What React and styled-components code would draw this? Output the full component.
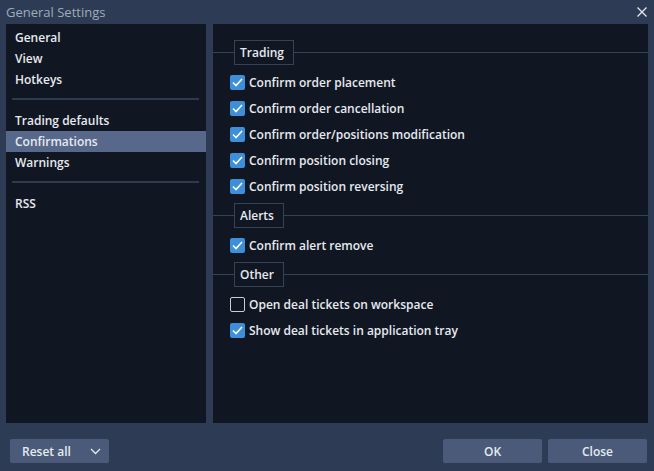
import styled, { createGlobalStyle } from 'styled-components';
import { useState } from 'react';

const GlobalStyle = createGlobalStyle`
	html, body {
		margin: 0;
		padding: 0;
		background: #2d3c54;
	}
	* {
		box-sizing: border-box;
	}
`;

const Dialog = styled.div`
	width: 654px;
	height: 471px;
	background: #2d3c54;
	font-family: 'Open Sans', 'Noto Sans', sans-serif;
	font-size: 12px;
	color: #e6eaf0;
	display: flex;
	flex-direction: column;
`;

const TitleBar = styled.div`
	height: 24px;
	display: flex;
	align-items: center;
	justify-content: space-between;
	padding: 0 6px 0 6px;
`;

const Title = styled.span`
	color: #9fabbc;
	font-size: 13px;
`;

const CloseX = styled.svg`
	width: 10px;
	height: 10px;
	margin-right: 1px;
`;

const Body = styled.div`
	height: 399px;
	display: flex;
	gap: 7px;
	padding: 0 6px;
`;

const Sidebar = styled.nav`
	width: 200px;
	background: #111722;
	padding-top: 3px;
	display: flex;
	flex-direction: column;
`;

const NavItem = styled.div`
	height: 21px;
	line-height: 21px;
	padding-left: 9px;
	font-weight: 600;
	background: ${(p) => (p.$active ? '#58688a' : 'transparent')};
	cursor: pointer;
`;

const NavSeparator = styled.hr`
	border: 0;
	height: 2px;
	background: #2f3a4c;
	margin: 8px 7px 10px 6px;
`;

const Content = styled.section`
	flex: 1;
	background: #111722;
	padding-top: 16px;
`;

const GroupHeader = styled.div`
	position: relative;
	height: 24px;
	display: flex;
	align-items: center;

	&::before {
		content: '';
		position: absolute;
		left: 0;
		right: 0;
		top: 12px;
		height: 1px;
		background: #364256;
	}
`;

const GroupLabel = styled.span`
	position: relative;
	margin-left: 21px;
	height: 25px;
	line-height: 23px;
	padding: 0 9px 0 5px;
	border: 1px solid #364256;
	background: #111722;
	font-weight: 600;
`;

const Options = styled.div`
	padding: 5px 0 4px 17px;
	display: flex;
	flex-direction: column;
`;

const Option = styled.label`
	height: 26px;
	display: flex;
	align-items: center;
	gap: 4px;
	font-weight: 600;
	cursor: pointer;
`;

const Box = styled.span`
	width: 15px;
	height: 15px;
	border-radius: 2px;
	display: flex;
	align-items: center;
	justify-content: center;
	background: ${(p) => (p.$checked ? '#3d8fd9' : 'transparent')};
	border: ${(p) => (p.$checked ? 'none' : '1px solid #c8ced8')};
`;

const Footer = styled.div`
	flex: 1;
	display: flex;
	align-items: flex-start;
	justify-content: space-between;
	padding: 16px 7px 0 10px;
`;

const Button = styled.button`
	width: 99px;
	height: 24px;
	border: 0;
	border-radius: 2px;
	background: #4a5a78;
	color: #e6eaf0;
	font-family: inherit;
	font-size: 12px;
	font-weight: 600;
	display: flex;
	align-items: center;
	justify-content: ${(p) => (p.$split ? 'space-between' : 'center')};
	padding: ${(p) => (p.$split ? '0 8px 0 12px' : '0')};
	cursor: pointer;
`;

const ButtonGroup = styled.div`
	display: flex;
	gap: 6px;
`;

const Check = () => (
	<svg width="11" height="9" viewBox="0 0 11 9">
		<path d="M1 4.5 L4 7.5 L10 1" fill="none" stroke="#fff" strokeWidth="1.6" />
	</svg>
);

const groups = [
	{
		title: 'Trading',
		options: [
			['Confirm order placement', true],
			['Confirm order cancellation', true],
			['Confirm order/positions modification', true],
			['Confirm position closing', true],
			['Confirm position reversing', true],
		],
	},
	{ title: 'Alerts', options: [['Confirm alert remove', true]] },
	{
		title: 'Other',
		options: [
			['Open deal tickets on workspace', false],
			['Show deal tickets in application tray', true],
		],
	},
];

const navGroups = [['General', 'View', 'Hotkeys'], ['Trading defaults', 'Confirmations', 'Warnings'], ['RSS']];

const App = () => {
	const [active, setActive] = useState('Confirmations');
	const [values, setValues] = useState(() =>
		Object.fromEntries(groups.flatMap((g) => g.options))
	);

	return (
		<Dialog>
			<GlobalStyle />
			<TitleBar>
				<Title>General Settings</Title>
				<CloseX viewBox="0 0 10 10">
					<path d="M0.5 0.5 L9.5 9.5 M9.5 0.5 L0.5 9.5" stroke="#e8ecf2" strokeWidth="1.2" />
				</CloseX>
			</TitleBar>
			<Body>
				<Sidebar>
					{navGroups.map((items, i) => (
						<div key={i}>
							{i > 0 && <NavSeparator />}
							{items.map((item) => (
								<NavItem key={item} $active={item === active} onClick={() => setActive(item)}>
									{item}
								</NavItem>
							))}
						</div>
					))}
				</Sidebar>
				<Content>
					{groups.map((g) => (
						<div key={g.title}>
							<GroupHeader>
								<GroupLabel>{g.title}</GroupLabel>
							</GroupHeader>
							<Options>
								{g.options.map(([label]) => (
									<Option
										key={label}
										onClick={() => setValues((v) => ({ ...v, [label]: !v[label] }))}
									>
										<Box $checked={values[label]}>{values[label] && <Check />}</Box>
										{label}
									</Option>
								))}
							</Options>
						</div>
					))}
				</Content>
			</Body>
			<Footer>
				<Button $split>
					Reset all
					<svg width="11" height="7" viewBox="0 0 11 7">
						<path d="M1 1 L5.5 5.5 L10 1" fill="none" stroke="#e6eaf0" strokeWidth="1.3" />
					</svg>
				</Button>
				<ButtonGroup>
					<Button>OK</Button>
					<Button>Close</Button>
				</ButtonGroup>
			</Footer>
		</Dialog>
	);
};

export default App;
